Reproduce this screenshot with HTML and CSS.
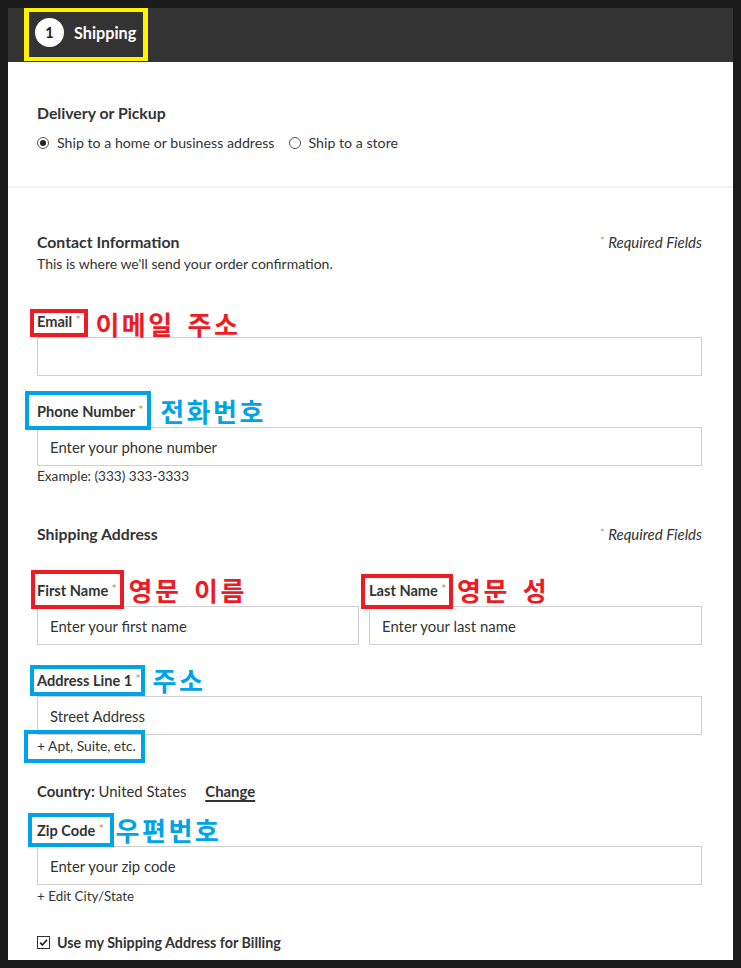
FILE: index.html
```html
<!DOCTYPE html>
<html lang="ko">
<head>
<meta charset="utf-8">
<title>Shipping</title>
<link rel="stylesheet" href="styles.css">
</head>
<body>
<div class="page">
  <header class="bar">
    <div class="step"><span class="num">1</span><span class="step-title">Shipping</span></div>
  </header>

  <section class="delivery">
    <h2 class="title">Delivery or Pickup</h2>
    <div class="radios">
      <label class="radio"><span class="rdot on"></span>Ship to a home or business address</label>
      <label class="radio"><span class="rdot"></span>Ship to a store</label>
    </div>
  </section>

  <section class="form">
    <div class="sec-head">
      <h2 class="title">Contact Information</h2>
      <span class="req"><span class="ast">*</span> Required Fields</span>
    </div>
    <p class="sub">This is where we'll send your order confirmation.</p>

    <div class="field f-email">
      <div class="lab-row">
        <span class="lab hl red hl-email">Email <span class="ast">*</span></span>
        <span class="note red n-email">이메일 주소</span>
      </div>
      <input class="inp" type="text" aria-label="Email">
    </div>

    <div class="field f-phone">
      <div class="lab-row">
        <span class="lab hl blue hl-phone">Phone Number <span class="ast">*</span></span>
        <span class="note blue n-phone">전화번호</span>
      </div>
      <input class="inp" type="text" placeholder="Enter your phone number">
    </div>
    <p class="hint">Example: (333) 333-3333</p>

    <div class="sec-head s-ship">
      <h2 class="title">Shipping Address</h2>
      <span class="req"><span class="ast">*</span> Required Fields</span>
    </div>

    <div class="names">
      <div class="field">
        <div class="lab-row">
          <span class="lab hl red hl-first">First Name <span class="ast">*</span></span>
          <span class="note red n-first">영문 이름</span>
        </div>
        <input class="inp" type="text" placeholder="Enter your first name">
      </div>
      <div class="field">
        <div class="lab-row">
          <span class="lab hl red hl-last">Last Name <span class="ast">*</span></span>
          <span class="note red n-last">영문 성</span>
        </div>
        <input class="inp" type="text" placeholder="Enter your last name">
      </div>
    </div>

    <div class="field f-addr">
      <div class="lab-row">
        <span class="lab hl blue hl-addr">Address Line 1 <span class="ast">*</span></span>
        <span class="note blue n-addr">주소</span>
      </div>
      <input class="inp" type="text" placeholder="Street Address">
    </div>
    <p class="hint h-apt"><span class="hl blue hl-apt">+ Apt, Suite, etc.</span></p>

    <div class="country"><b>Country:</b> United States <a class="change">Change</a></div>

    <div class="field f-zip">
      <div class="lab-row">
        <span class="lab hl blue hl-zip">Zip Code <span class="ast">*</span></span>
        <span class="note blue n-zip">우편번호</span>
      </div>
      <input class="inp" type="text" placeholder="Enter your zip code">
    </div>
    <p class="hint h-city">+ Edit City/State</p>

    <label class="check">
      <span class="cbox"><svg width="13" height="13" viewBox="0 0 13 13"><path d="M2.6 6.6 L5.2 9.4 L10.6 3.2" fill="none" stroke="#222" stroke-width="1.9"/></svg></span>
      Use my Shipping Address for Billing
    </label>
  </section>
</div>
</body>
</html>
```

FILE: styles.css
```css
* { box-sizing: border-box; }

body {
  margin: 0;
  padding: 8px;
  background: #1b1b1b;
  font-family: "Lato", "Noto Sans", sans-serif;
  color: #333;
}

.page {
  background: #fff;
  height: 952px;
  overflow: hidden;
}

/* header */
.bar {
  height: 54px;
  background: #333;
  padding-left: 16px;
}
.step {
  display: inline-flex;
  align-items: center;
  gap: 10px;
  width: 124px;
  height: 53px;
  border: solid #fff200;
  border-width: 4px 5px;
  padding: 0 0 5px 6px;
}
.num {
  width: 29px;
  height: 29px;
  border-radius: 50%;
  background: #fff;
  color: #222;
  font-weight: 700;
  font-size: 14.5px;
  display: flex;
  align-items: center;
  justify-content: center;
}
.step-title {
  color: #fff;
  font-weight: 700;
  font-size: 16.2px;
}

/* delivery */
.delivery {
  padding: 41px 31px 33px 29px;
  border-bottom: 2px solid #f2f2f2;
}
.title {
  margin: 0;
  font-size: 15.8px;
  font-weight: 700;
  line-height: 20px;
  color: #333;
}
.radios {
  display: flex;
  gap: 14px;
  margin-top: 10px;
  font-size: 14.2px;
  line-height: 20px;
}
.radio {
  display: flex;
  align-items: center;
  gap: 8px;
}
.rdot {
  width: 12px;
  height: 12px;
  border: 1px solid #555;
  border-radius: 50%;
  display: flex;
  align-items: center;
  justify-content: center;
}
.rdot.on::before {
  content: "";
  width: 6px;
  height: 6px;
  border-radius: 50%;
  background: #222;
}

/* form */
.form {
  padding: 44px 31px 0 29px;
}
.sec-head {
  display: flex;
  justify-content: space-between;
  align-items: center;
  height: 20px;
}
.s-ship { margin-top: 40px; }
.req {
  font-style: italic;
  font-size: 15px;
}
.ast {
  color: #bba66e;
  font-size: 11px;
  font-style: normal;
  vertical-align: 3px;
}
.sub {
  margin: 3px 0 0;
  font-size: 14px;
  line-height: 18px;
}

.field { display: flex; flex-direction: column; }
.f-email { margin-top: 38px; }
.f-phone { margin-top: 25px; }
.f-addr { margin-top: 25px; }
.f-zip { margin-top: 19px; }

.lab-row {
  display: flex;
  align-items: center;
  height: 20px;
}
.lab {
  font-size: 14.6px;
  font-weight: 700;
  line-height: 20px;
  white-space: nowrap;
}

.inp {
  margin-top: 6px;
  height: 39px;
  width: 100%;
  border: 1px solid #cfcfcf;
  padding: 0 12px;
  font-family: inherit;
  font-size: 14.9px;
  color: #333;
  background: #fff;
  outline: none;
}
.inp::placeholder { color: #333; opacity: 1; }

.hint {
  margin: 2px 0 0;
  font-size: 13.6px;
  line-height: 16px;
}
.h-apt { margin-top: 3px; font-size: 13.8px; }
.h-city { margin-top: 3px; font-size: 13.4px; }

.names {
  display: grid;
  grid-template-columns: 322px 1fr;
  gap: 10px;
  margin-top: 36px;
}

.country {
  margin-top: 27px;
  font-size: 14.9px;
  line-height: 20px;
}
.change {
  margin-left: 15px;
  font-weight: 700;
  text-decoration: underline;
  text-underline-offset: 3px;
  text-decoration-thickness: 1.5px;
}

.check {
  display: flex;
  align-items: center;
  gap: 7px;
  margin-top: 28px;
  height: 20px;
  font-size: 14.3px;
  font-weight: 700;
}
.cbox {
  width: 13px;
  height: 13px;
  border: 1.5px solid #333;
  display: flex;
  align-items: center;
  justify-content: center;
}
.cbox svg { width: 11px; height: 11px; }

/* annotation overlays */
.hl { position: relative; }
.hl::after {
  content: "";
  position: absolute;
  border: 4px solid currentColor;
  pointer-events: none;
}
.hl.red::after { border-color: #ed1c24; }
.hl.blue::after { border-color: #00a2e8; }
.hl.red, .hl.blue { color: #333; }

.hl-email::after { top: -1px; bottom: -5px; left: -7px; right: -8px; }
.hl-phone::after { top: -9px; bottom: -8px; left: -12px; right: -8px; }
.hl-first::after { top: -9px; bottom: -8px; left: -6px; right: -8px; }
.hl-last::after  { top: -5px; bottom: -8px; left: -8px; right: -7px; }
.hl-addr::after  { top: -4px; bottom: -5px; left: -7px; right: -4px; }
.hl-apt { display: inline-block; }
.hl-apt::after   { top: -8px; bottom: -9px; left: -13px; right: -9px; }
.hl-zip::after   { top: -6px; bottom: -6px; left: -9px; right: -10px; }

.note {
  font-family: "Noto Sans CJK KR", sans-serif;
  font-weight: 700;
  font-size: 26px;
  line-height: 20px;
  letter-spacing: 2.5px;
  word-spacing: 3px;
  white-space: nowrap;
}
.note.red { color: #ed1c24; }
.note.blue { color: #00a2e8; }
.n-email { margin-left: 15px; position: relative; top: 3px; }
.n-phone { margin-left: 17px; }
.n-first { margin-left: 12px; }
.n-last  { margin-left: 11px; }
.n-addr  { margin-left: 12px; }
.n-zip   { margin-left: 12px; }
```
